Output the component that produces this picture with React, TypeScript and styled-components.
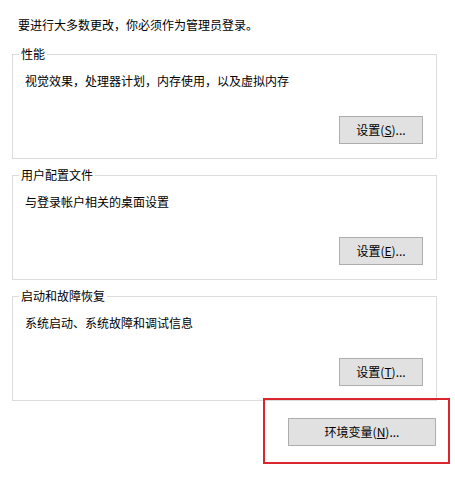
import React from "react";
import styled, { createGlobalStyle } from "styled-components";

interface GroupInfo {
  title: string;
  text: string;
  key: string;
}

const groups: GroupInfo[] = [
  { title: "性能", text: "视觉效果，处理器计划，内存使用，以及虚拟内存", key: "S" },
  { title: "用户配置文件", text: "与登录帐户相关的桌面设置", key: "E" },
  { title: "启动和故障恢复", text: "系统启动、系统故障和调试信息", key: "T" },
];

const GlobalStyle = createGlobalStyle`
  html, body {
    margin: 0;
    padding: 0;
    background: #ffffff;
  }
  body {
    font-family: "Noto Sans CJK SC", "Noto Sans", sans-serif;
    font-size: 12px;
    color: #000000;
  }
`;

const Page = styled.div`
  width: 455px;
  height: 480px;
  padding-top: 17px;
  box-sizing: border-box;
  background: #ffffff;
`;

const Notice = styled.div`
  margin-left: 18px;
  line-height: 16px;
  margin-bottom: 13px;
`;

const Group = styled.fieldset`
  box-sizing: border-box;
  width: 425px;
  margin: 0 0 8px 12px;
  padding: 0 13px 14px 12px;
  border: 1px solid #dcdcdc;
  display: flex;
  flex-direction: column;
  min-width: 0;
`;

const Legend = styled.legend`
  margin-left: -6px;
  padding: 0 2px;
  line-height: 16px;
`;

const Description = styled.div`
  margin-top: 11px;
  line-height: 16px;
`;

const ButtonRow = styled.div`
  display: flex;
  justify-content: flex-end;
  margin-top: 27px;
`;

const Button = styled.button<{ $width: number }>`
  box-sizing: border-box;
  width: ${(p) => p.$width}px;
  height: 28px;
  padding: 0;
  background: #e1e1e1;
  border: 1px solid #adadad;
  border-radius: 0;
  font-family: inherit;
  font-size: 12px;
  color: #000000;
  line-height: 16px;
  cursor: default;
`;

const Key = styled.span`
  text-decoration: underline;
`;

/* annotation frame, overlaps the last group's bottom edge */
const Highlight = styled.div`
  box-sizing: border-box;
  width: 187px;
  height: 66px;
  margin: -11px 0 0 263px;
  border: 2px solid #d9252c;
  padding: 18px 12px 0 0;
  display: flex;
  justify-content: flex-end;
  align-items: flex-start;
  position: relative;
`;

const App: React.FC = () => {
  return (
    <>
      <GlobalStyle />
      <Page>
        <Notice>要进行大多数更改，你必须作为管理员登录。</Notice>
        {groups.map((g) => (
          <Group key={g.title}>
            <Legend>{g.title}</Legend>
            <Description>{g.text}</Description>
            <ButtonRow>
              <Button $width={84}>
                设置(<Key>{g.key}</Key>)...
              </Button>
            </ButtonRow>
          </Group>
        ))}
        <Highlight>
          <Button $width={148}>
            环境变量(<Key>N</Key>)...
          </Button>
        </Highlight>
      </Page>
    </>
  );
};

export default App;
